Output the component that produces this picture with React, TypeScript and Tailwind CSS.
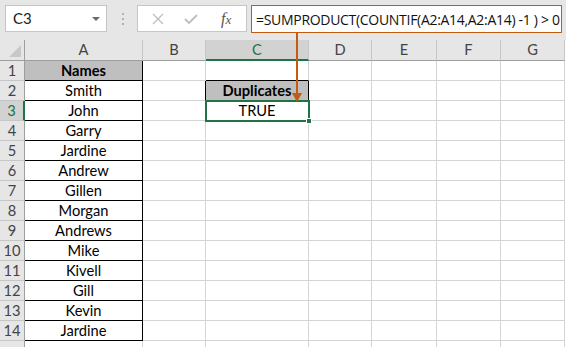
const names = [
  "Smith",
  "John",
  "Garry",
  "Jardine",
  "Andrew",
  "Gillen",
  "Morgan",
  "Andrews",
  "Mike",
  "Kivell",
  "Gill",
  "Kevin",
  "Jardine",
];

const cols = ["A", "B", "C", "D", "E", "F", "G"];
const widths = ["w-[118px]", "w-[63px]", "w-[103px]", "w-[63px]", "w-[65px]", "w-[64px]", "w-[64px]"];

function Toolbar() {
  return (
    <div className="flex h-[40px] items-start gap-0 bg-[#e6e6e6] pt-[5px]">
      <div className="ml-[5px] flex h-[27px] w-[102px] items-center justify-between border border-[#c6c6c6] bg-white pl-[7px] pr-[6px] text-[15px] text-[#222]">
        <span>C3</span>
        <span className="h-0 w-0 border-x-[4px] border-t-[4px] border-x-transparent border-t-[#6b6b6b]" />
      </div>
      <div className="ml-[15px] mr-[13px] flex h-[27px] flex-col items-center justify-center gap-[3px]">
        <span className="h-[2px] w-[2px] bg-[#b0b0b0]" />
        <span className="h-[2px] w-[2px] bg-[#b0b0b0]" />
        <span className="h-[2px] w-[2px] bg-[#b0b0b0]" />
      </div>
      <div className="flex h-[27px] w-[110px] items-center border border-[#c6c6c6] bg-white">
        <svg width="14" height="14" viewBox="0 0 14 14" className="ml-[13px]">
          <path d="M2 2 L12 12 M12 2 L2 12" stroke="#bdbdbd" strokeWidth="1.3" fill="none" />
        </svg>
        <svg width="16" height="14" viewBox="0 0 16 14" className="ml-[18px]">
          <path d="M2 7 L6 11 L14 3" stroke="#bdbdbd" strokeWidth="1.8" fill="none" />
        </svg>
        <span className="ml-[22px] font-['Liberation_Serif',serif] text-[16px] italic text-[#555]">
          f<span className="text-[13px]">x</span>
        </span>
      </div>
      <div className="ml-[4px] flex h-[28px] w-[311px] items-center border border-[#c55a11] bg-white pl-[4px] font-['Open_Sans',sans-serif] text-[14px] tracking-[-0.3px] text-[#111]">
        =SUMPRODUCT(COUNTIF(A2:A14,A2:A14) -1 ) &gt; 0
      </div>
    </div>
  );
}

function HeaderRow() {
  return (
    <div className="flex h-[21px]">
      <div className="relative h-[21px] w-[25px] border-r border-b border-[#9e9e9e] bg-[#e6e6e6]">
        <span className="absolute bottom-[3px] right-[3px] h-0 w-0 border-b-[12px] border-l-[12px] border-b-[#c8c8c8] border-l-transparent" />
      </div>
      {cols.map((c, i) => (
        <div
          key={c}
          className={`${widths[i]} flex h-[21px] items-center justify-center border-r ${
            c === "C"
              ? "border-b-2 border-r-[#c6c6c6] border-b-[#217346] bg-[#d2d2d2] text-[#217346]"
              : "border-b border-[#9e9e9e] border-r-[#c6c6c6] bg-[#e6e6e6] text-[#444]"
          }`}
        >
          {c}
        </div>
      ))}
    </div>
  );
}

function Row({ n }: { n: number }) {
  const inTable = n <= 14;
  const name = n === 1 ? "Names" : names[n - 2];
  return (
    <div className="flex h-[20px]">
      <div
        className={`flex h-[20px] w-[25px] items-center justify-center border-b border-r border-b-[#c6c6c6] ${
          n === 3
            ? "border-r-2 border-r-[#217346] bg-[#d2d2d2] text-[#217346]"
            : "border-r-[#9e9e9e] bg-[#e6e6e6] text-[#444]"
        }`}
      >
        {inTable ? n : ""}
      </div>
      {cols.map((c, i) => {
        let cls = "border-r border-b border-[#d4d4d4]";
        let text = "";
        if (c === "A" && inTable) {
          cls = `border-r border-b border-black ${n === 1 ? "bg-[#bfbfbf] font-bold" : ""}`;
          text = name ?? "";
        }
        if (c === "B" && n === 2) cls = "border-r border-b border-[#d4d4d4] border-r-black";
        if (c === "C" && n === 1) cls = "border-r border-b border-[#d4d4d4] border-b-black";
        if (c === "C" && n === 2) {
          cls = "border-r border-b border-black bg-[#bfbfbf] font-bold";
          text = "Duplicates";
        }
        if (c === "C" && n === 3) text = "TRUE";
        return (
          <div
            key={c}
            className={`${widths[i]} flex h-[20px] items-center justify-center text-black ${cls}`}
          >
            {text}
          </div>
        );
      })}
    </div>
  );
}

export default function App() {
  return (
    <div className="relative h-[347px] w-[566px] overflow-hidden bg-white font-['Lato',sans-serif] text-[14.67px]">
      <Toolbar />
      <HeaderRow />
      {Array.from({ length: 15 }, (_, i) => (
        <Row key={i} n={i + 1} />
      ))}

      {/* selected cell C3 */}
      <div className="absolute left-[205px] top-[100px] h-[22px] w-[105px] border-2 border-[#217346]" />
      <div className="absolute left-[306px] top-[118px] h-[6px] w-[6px] border border-white bg-[#217346]" />

      {/* formula arrow */}
      <div className="absolute left-[296px] top-[33px] h-[61px] w-[2px] bg-[#c55a11]" />
      <div className="absolute left-[292px] top-[93px] h-0 w-0 border-x-[5px] border-t-[9px] border-x-transparent border-t-[#c55a11]" />
    </div>
  );
}
